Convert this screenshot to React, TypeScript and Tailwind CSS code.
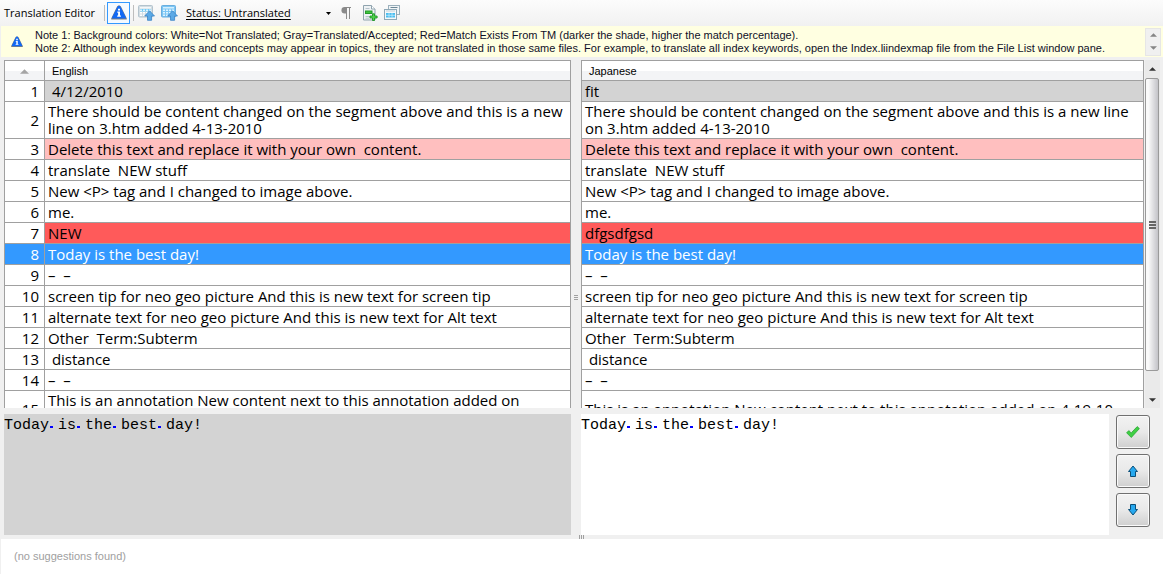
import { useState } from "react";

type Tone = "plain" | "accepted" | "match" | "strongMatch" | "selected";

interface Segment {
  id: number;
  source: string;
  target: string;
  tone: Tone;
  tall?: boolean;
}

// Word joiners (U+2060) keep a trailing date on one line.
const annotation = "This is an annotation New content next to this annotation added on 4-\u206019-\u206010";

const segments: Segment[] = [
  { id: 1, source: " 4/12/2010", target: "fit", tone: "accepted" },
  {
    id: 2,
    source: "There should be content changed on the segment above and this is a new line on 3.htm added 4-13-2010",
    target: "There should be content changed on the segment above and this is a new line on 3.htm added 4-13-2010",
    tone: "plain",
    tall: true,
  },
  {
    id: 3,
    source: "Delete this text and replace it with your own  content.",
    target: "Delete this text and replace it with your own  content.",
    tone: "match",
  },
  { id: 4, source: "translate  NEW stuff", target: "translate  NEW stuff", tone: "plain" },
  { id: 5, source: "New <P> tag and I changed to image above.", target: "New <P> tag and I changed to image above.", tone: "plain" },
  { id: 6, source: "me.", target: "me.", tone: "plain" },
  { id: 7, source: "NEW", target: "dfgsdfgsd", tone: "strongMatch" },
  { id: 8, source: "Today is the best day!", target: "Today is the best day!", tone: "selected" },
  { id: 9, source: "–  –", target: "–  –", tone: "plain" },
  {
    id: 10,
    source: "screen tip for neo geo picture And this is new text for screen tip",
    target: "screen tip for neo geo picture And this is new text for screen tip",
    tone: "plain",
  },
  {
    id: 11,
    source: "alternate text for neo geo picture And this is new text for Alt text",
    target: "alternate text for neo geo picture And this is new text for Alt text",
    tone: "plain",
  },
  { id: 12, source: "Other  Term:Subterm", target: "Other  Term:Subterm", tone: "plain" },
  { id: 13, source: " distance", target: " distance", tone: "plain" },
  { id: 14, source: "–  –", target: "–  –", tone: "plain" },
  { id: 15, source: annotation, target: annotation, tone: "plain", tall: true },
];

const toneClass: Record<Tone, string> = {
  plain: "bg-white text-black",
  accepted: "bg-[#d3d3d3] text-black",
  match: "bg-[#ffbfbf] text-black",
  strongMatch: "bg-[#ff5a5a] text-black",
  selected: "bg-[#3399ff] text-white",
};

function InfoIcon({ className }: { className: string }) {
  return (
    <svg viewBox="0 0 16 16" className={className} aria-hidden="true">
      <path d="M1 14.6h14c.9 0 1-.7.7-1.4L10.200 2C9.700 1 9 .5 8 .5S6.300 1 5.800 2L.3 13.200c-.3.7-.2 1.400.7 1.400z" fill="#555" opacity=".75" />
      <path d="M1.600 13.500h12.800c.6 0 .7-.5.5-1L9.600 2C9.200 1.200 8.700.8 8 .8s-1.200.4-1.600 1.200L1.100 12.500c-.2.5-.1 1 .5 1z" fill="#1168f4" />
      <path d="M7 3.700h2v1.800H7zM6.300 6.600H9v4h.9v1.200H6.200v-1.200h.9V7.800h-.8z" fill="#fff" />
    </svg>
  );
}

function TableUpIcon({ full }: { full?: boolean }) {
  return (
    <svg viewBox="0 0 17 16" className="h-4 w-[17px]" aria-hidden="true">
      <rect x=".5" y=".5" width="14" height="11.500" rx="1" fill={full ? "#7cc6f5" : "#d3dde3"} stroke={full ? "#6aaede" : "#b3c3cd"} />
      <rect x="2" y="2" width="11" height="1.500" fill={full ? "#d5effd" : "#f4f8fa"} />
      {!full && <path d="M2 4h11v2.500H2z" fill="#6fcaf6" />}
      {[4.500, 7, 9.500].map((y) =>
        [2, 5, 8, 11].map((x) => (
          <rect key={`${x}-${y}`} x={x} y={y} width="2" height="1.500" fill={full || y === 4.500 ? "#dff4ff" : "#fff"} />
        )),
      )}
      <path d="M11.500 5.800 16.500 11h-2.900v4.300H9.500V11H6.700z" fill="#5ba9e6" stroke="#3b83c5" strokeWidth=".8" />
    </svg>
  );
}

function AddPageIcon() {
  return (
    <svg viewBox="0 0 15 16" className="h-4 w-[15px]" aria-hidden="true">
      <path d="M.5.5h8l3.500 3.500v11H.5z" fill="#eef2f4" stroke="#8fa3ae" />
      <path d="M8.500.5V4H12" fill="#fff" stroke="#8fa3ae" />
      <path d="M2.500 3.500h4M2.500 11.500h5M2.500 13.200h4" stroke="#b7c4cb" />
      <rect x="2.500" y="6" width="6.500" height="2.500" fill="#3fc43f" stroke="#259a2a" />
      <path d="M9.500 8.800h2v2.200h2.600v2h-2.600v2.500h-2V13H7v-2h2.500z" fill="#4ed24a" stroke="#1f9628" strokeWidth=".9" />
    </svg>
  );
}

function WindowsIcon() {
  return (
    <svg viewBox="0 0 16 16" className="size-4" aria-hidden="true">
      <rect x="4.500" y=".5" width="11" height="9" fill="#f1f5f7" stroke="#9bb0bc" />
      <path d="M6.500 2.500h7" stroke="#6c8796" />
      <rect x=".5" y="4.500" width="12" height="10" fill="#f4f8fa" stroke="#8fa8b6" />
      <path d="M2 6h9" stroke="#c3d0d8" />
      <rect x="2" y="8" width="9" height="4.500" fill="#49bdf0" />
      <path d="M5 8v4.500M8 8v4.500M2 10.300h9" stroke="#cdeefb" strokeWidth=".7" />
    </svg>
  );
}

function Separator() {
  return <span className="h-4 w-px bg-[#bdbdbd]" />;
}

function Toolbar() {
  return (
    <header className="flex h-[26px] shrink-0 items-center bg-linear-to-b from-[#fcfcfc] to-[#f1f1f1] pl-1 font-['Open_Sans',sans-serif] text-[11px] text-black">
      <h1 className="w-[100px]">Translation Editor</h1>
      <Separator />
      <button type="button" aria-label="Show notes" aria-pressed="true" className="ml-0.5 grid h-[22px] w-[23px] place-items-center border border-[#3399ff] bg-[#f4f9ff]">
        <InfoIcon className="size-4" />
      </button>
      <span className="ml-[3px] flex">
        <Separator />
      </span>
      <button type="button" aria-label="Accept segment" className="ml-1">
        <TableUpIcon />
      </button>
      <button type="button" aria-label="Accept all segments" className="ml-1.5">
        <TableUpIcon full />
      </button>
      <label className="relative ml-2 flex items-center">
        <select aria-label="Filter by status" className="h-5 w-[147px] appearance-none underline underline-offset-2 outline-none">
          <option>Status: Untranslated</option>
        </select>
        <svg viewBox="0 0 5 3" className="pointer-events-none absolute right-0.5 h-[3px] w-[5px]" aria-hidden="true">
          <path d="M0 0h5L2.500 3z" />
        </svg>
      </label>
      <button type="button" aria-label="Show marks" className="ml-2">
        <svg viewBox="0 0 10 12" className="h-3 w-2.5" aria-hidden="true">
          <path d="M4.500.5H10M5.500.5V12M8.500.5V12" stroke="#8a8a8a" fill="none" />
          <path d="M5.500 0v6.500H3.700A3.200 3.200 0 0 1 3.700 0z" fill="#8a8a8a" />
        </svg>
      </button>
      <button type="button" aria-label="Add segment" className="ml-3">
        <AddPageIcon />
      </button>
      <button type="button" aria-label="Switch windows" className="ml-1.5">
        <WindowsIcon />
      </button>
    </header>
  );
}

function Triangle({ up, className }: { up?: boolean; className: string }) {
  return (
    <svg viewBox="0 0 8 4" className={className} aria-hidden="true">
      <path d={up ? "M0 4h8L4 0z" : "M0 0h8L4 4z"} />
    </svg>
  );
}

function Notes() {
  return (
    <section className="ml-px flex h-[31px] shrink-0 items-center bg-[#ffffe1] font-['Liberation_Sans',sans-serif] text-[11px] leading-[13px] text-[#101028]">
      <span className="flex w-[34px] pl-[10px]">
        <InfoIcon className="size-3" />
      </span>
      <div className="min-w-0 flex-1 overflow-hidden whitespace-nowrap">
        <p>Note 1: Background colors: White=Not Translated; Gray=Translated/Accepted; Red=Match Exists From TM (darker the shade, higher the match percentage).</p>
        <p>
          Note 2: Although index keywords and concepts may appear in topics, they are not translated in those same files. For example, to translate all index keywords, open
          the Index.liindexmap file from the File List window pane.
        </p>
      </div>
      <div className="mr-0.5 flex h-7 w-4 flex-col border border-[#e6e6e6] bg-[#f0f0f0]">
        <button type="button" aria-label="Scroll notes up" className="grid flex-1 place-items-center">
          <Triangle up className="h-1 w-[7px] fill-[#858585]" />
        </button>
        <button type="button" aria-label="Scroll notes down" className="grid flex-1 place-items-center">
          <Triangle className="h-1 w-[7px] fill-[#858585]" />
        </button>
      </div>
    </section>
  );
}

function SegmentTable({ language, side }: { language: string; side: "source" | "target" }) {
  const numbered = side === "source";
  return (
    <div className="min-w-0 overflow-hidden border-t border-l border-[#a0a0a0] bg-white">
      <table className="w-full table-fixed border-separate border-spacing-0">
        <thead>
          <tr className="h-5 bg-linear-to-b from-white from-50% to-[#f3f4f6] to-50% text-left font-['Liberation_Sans',sans-serif] text-[11px] leading-[15px] text-black">
            {numbered && (
              <th scope="col" aria-label="Segment" className="w-10 border-r border-b border-[#a0a0a0] p-0">
                <Triangle up className="mx-auto mt-0.5 h-[5px] w-[9px] fill-[#a5a5a5]" />
              </th>
            )}
            <th scope="col" className="border-r border-b border-[#a0a0a0] px-[7px] pt-0.5 pb-0 font-normal">
              {language}
            </th>
          </tr>
        </thead>
        <tbody className="font-['Open_Sans',sans-serif] text-[15px] leading-[17px]">
          {segments.map((segment) => (
            <tr key={segment.id} className={segment.tall ? "h-[37px]" : "h-[21px]"}>
              {numbered && (
                <td
                  className={`border-r border-b border-[#a0a0a0] py-px pr-[5px] text-right align-middle ${
                    segment.tone === "selected" ? "bg-[#3399ff] text-white" : "bg-white text-black"
                  }`}
                >
                  {segment.id}
                </td>
              )}
              <td className={`border-r border-b border-[#a0a0a0] py-px pr-1 pl-[3px] align-middle whitespace-pre-wrap ${toneClass[segment.tone]}`}>
                {segment[side]}
              </td>
            </tr>
          ))}
        </tbody>
      </table>
    </div>
  );
}

function Scrollbar() {
  return (
    <div className="mr-[3px] ml-px flex flex-col bg-[#eaeaea]">
      <button type="button" aria-label="Scroll up" className="grid h-[18px] place-items-center">
        <Triangle up className="h-1 w-[7px] fill-[#333]" />
      </button>
      <div className="mr-px grid flex-[293] place-items-center rounded-xs border border-[#9a9a9a] bg-linear-to-r from-[#fafafa] from-20% to-[#c3c3c8]">
        <span className="flex flex-col gap-px">
          <span className="h-0.5 w-[7px] bg-[#666]" />
          <span className="h-0.5 w-[7px] bg-[#666]" />
          <span className="h-0.5 w-[7px] bg-[#666]" />
        </span>
      </div>
      <div className="flex-[20]" />
      <button type="button" aria-label="Scroll down" className="grid h-[17px] place-items-center">
        <Triangle className="h-1 w-[7px] fill-[#333]" />
      </button>
    </div>
  );
}

const editorText = "col-start-1 row-start-1 font-['Liberation_Mono',monospace] text-[15px] leading-[17px] whitespace-pre-wrap pt-[3px]";

function Editor({ label, value, onChange, className }: { label: string; value: string; onChange?: (text: string) => void; className: string }) {
  return (
    <div className={`grid min-w-0 ${className}`}>
      <textarea
        aria-label={label}
        value={value}
        readOnly={!onChange}
        spellCheck={false}
        onChange={(event) => onChange?.(event.target.value)}
        className={`${editorText} block w-full resize-none bg-transparent text-black outline-none`}
      />
      {/* Space marks, laid on the same monospace grid as the text. */}
      <div aria-hidden="true" className={`${editorText} pointer-events-none`}>
        {value.split("").map((char, index) =>
          char === " " ? (
            <span key={index} className="relative before:absolute before:bottom-1.5 before:left-px before:h-0.5 before:w-[3px] before:bg-[#0000ff]">
              {" "}
            </span>
          ) : (
            " "
          ),
        )}
      </div>
    </div>
  );
}

const actionButton =
  "grid size-[34px] place-items-center rounded-[3px] border border-[#707070] bg-linear-to-b from-[#f2f2f2] via-[#e9e9e9] via-50% to-[#cfcfcf] shadow-[inset_0_0_0_1px_#fafafa]";

function ArrowIcon({ down }: { down?: boolean }) {
  return (
    <svg viewBox="0 0 10 12" className="h-3 w-2.5" aria-hidden="true">
      <path d={down ? "M2.500.5h5v5h2L5 11 .5 5.500h2z" : "M2.500 11.500h5v-5h2L5 1 .5 6.500h2z"} fill="#27a9f0" stroke="#0c4f78" />
    </svg>
  );
}

export default function App() {
  const [draft, setDraft] = useState("Today is the best day!");
  return (
    <div className="flex h-screen flex-col overflow-hidden bg-[#f0f0f0]">
      <Toolbar />
      <Notes />
      <main className="grid min-h-0 flex-1 grid-cols-[567fr_10px_563fr_19px] grid-rows-[minmax(0,1fr)_121px] gap-y-1.5 pt-[3px] pl-1">
        <SegmentTable language="English" side="source" />
        <div className="grid place-items-center pt-[126px]">
          <span className="flex flex-col gap-px">
            <span className="h-px w-1 bg-[#a0a0a0]" />
            <span className="h-px w-1 bg-[#a0a0a0]" />
            <span className="h-px w-1 bg-[#a0a0a0]" />
          </span>
        </div>
        <SegmentTable language="Japanese" side="target" />
        <Scrollbar />
        <Editor label="Source segment" value="Today is the best day!" className="bg-[#d3d3d3]" />
        <div />
        <div className="col-span-2 flex">
          <Editor label="Target segment" value={draft} onChange={setDraft} className="flex-1 bg-white" />
          <div className="flex w-[54px] flex-col gap-[5px] pt-px pl-[7px]">
            <button type="button" aria-label="Accept translation" className={actionButton}>
              <svg viewBox="0 0 14 12" className="h-3 w-3.5" aria-hidden="true">
                <path d="M.6 6.800 2.800 4.600l2.400 2.300L11.200.6l2.200 2L5.300 11.500z" fill="#3fd044" stroke="#1f9c2a" strokeWidth=".7" />
              </svg>
            </button>
            <button type="button" aria-label="Previous segment" className={actionButton}>
              <ArrowIcon />
            </button>
            <button type="button" aria-label="Next segment" className={actionButton}>
              <ArrowIcon down />
            </button>
          </div>
        </div>
      </main>
      <div className="flex h-1 shrink-0 justify-center gap-px">
        <span className="w-px bg-[#a0a0a0]" />
        <span className="w-px bg-[#a0a0a0]" />
        <span className="w-px bg-[#a0a0a0]" />
      </div>
      <footer className="ml-px h-[35px] shrink-0 bg-white px-[13px] pt-[10px] font-['Liberation_Sans',sans-serif] text-[11px] leading-[15px] text-[#a0a0a0]">
        (no suggestions found)
      </footer>
    </div>
  );
}
